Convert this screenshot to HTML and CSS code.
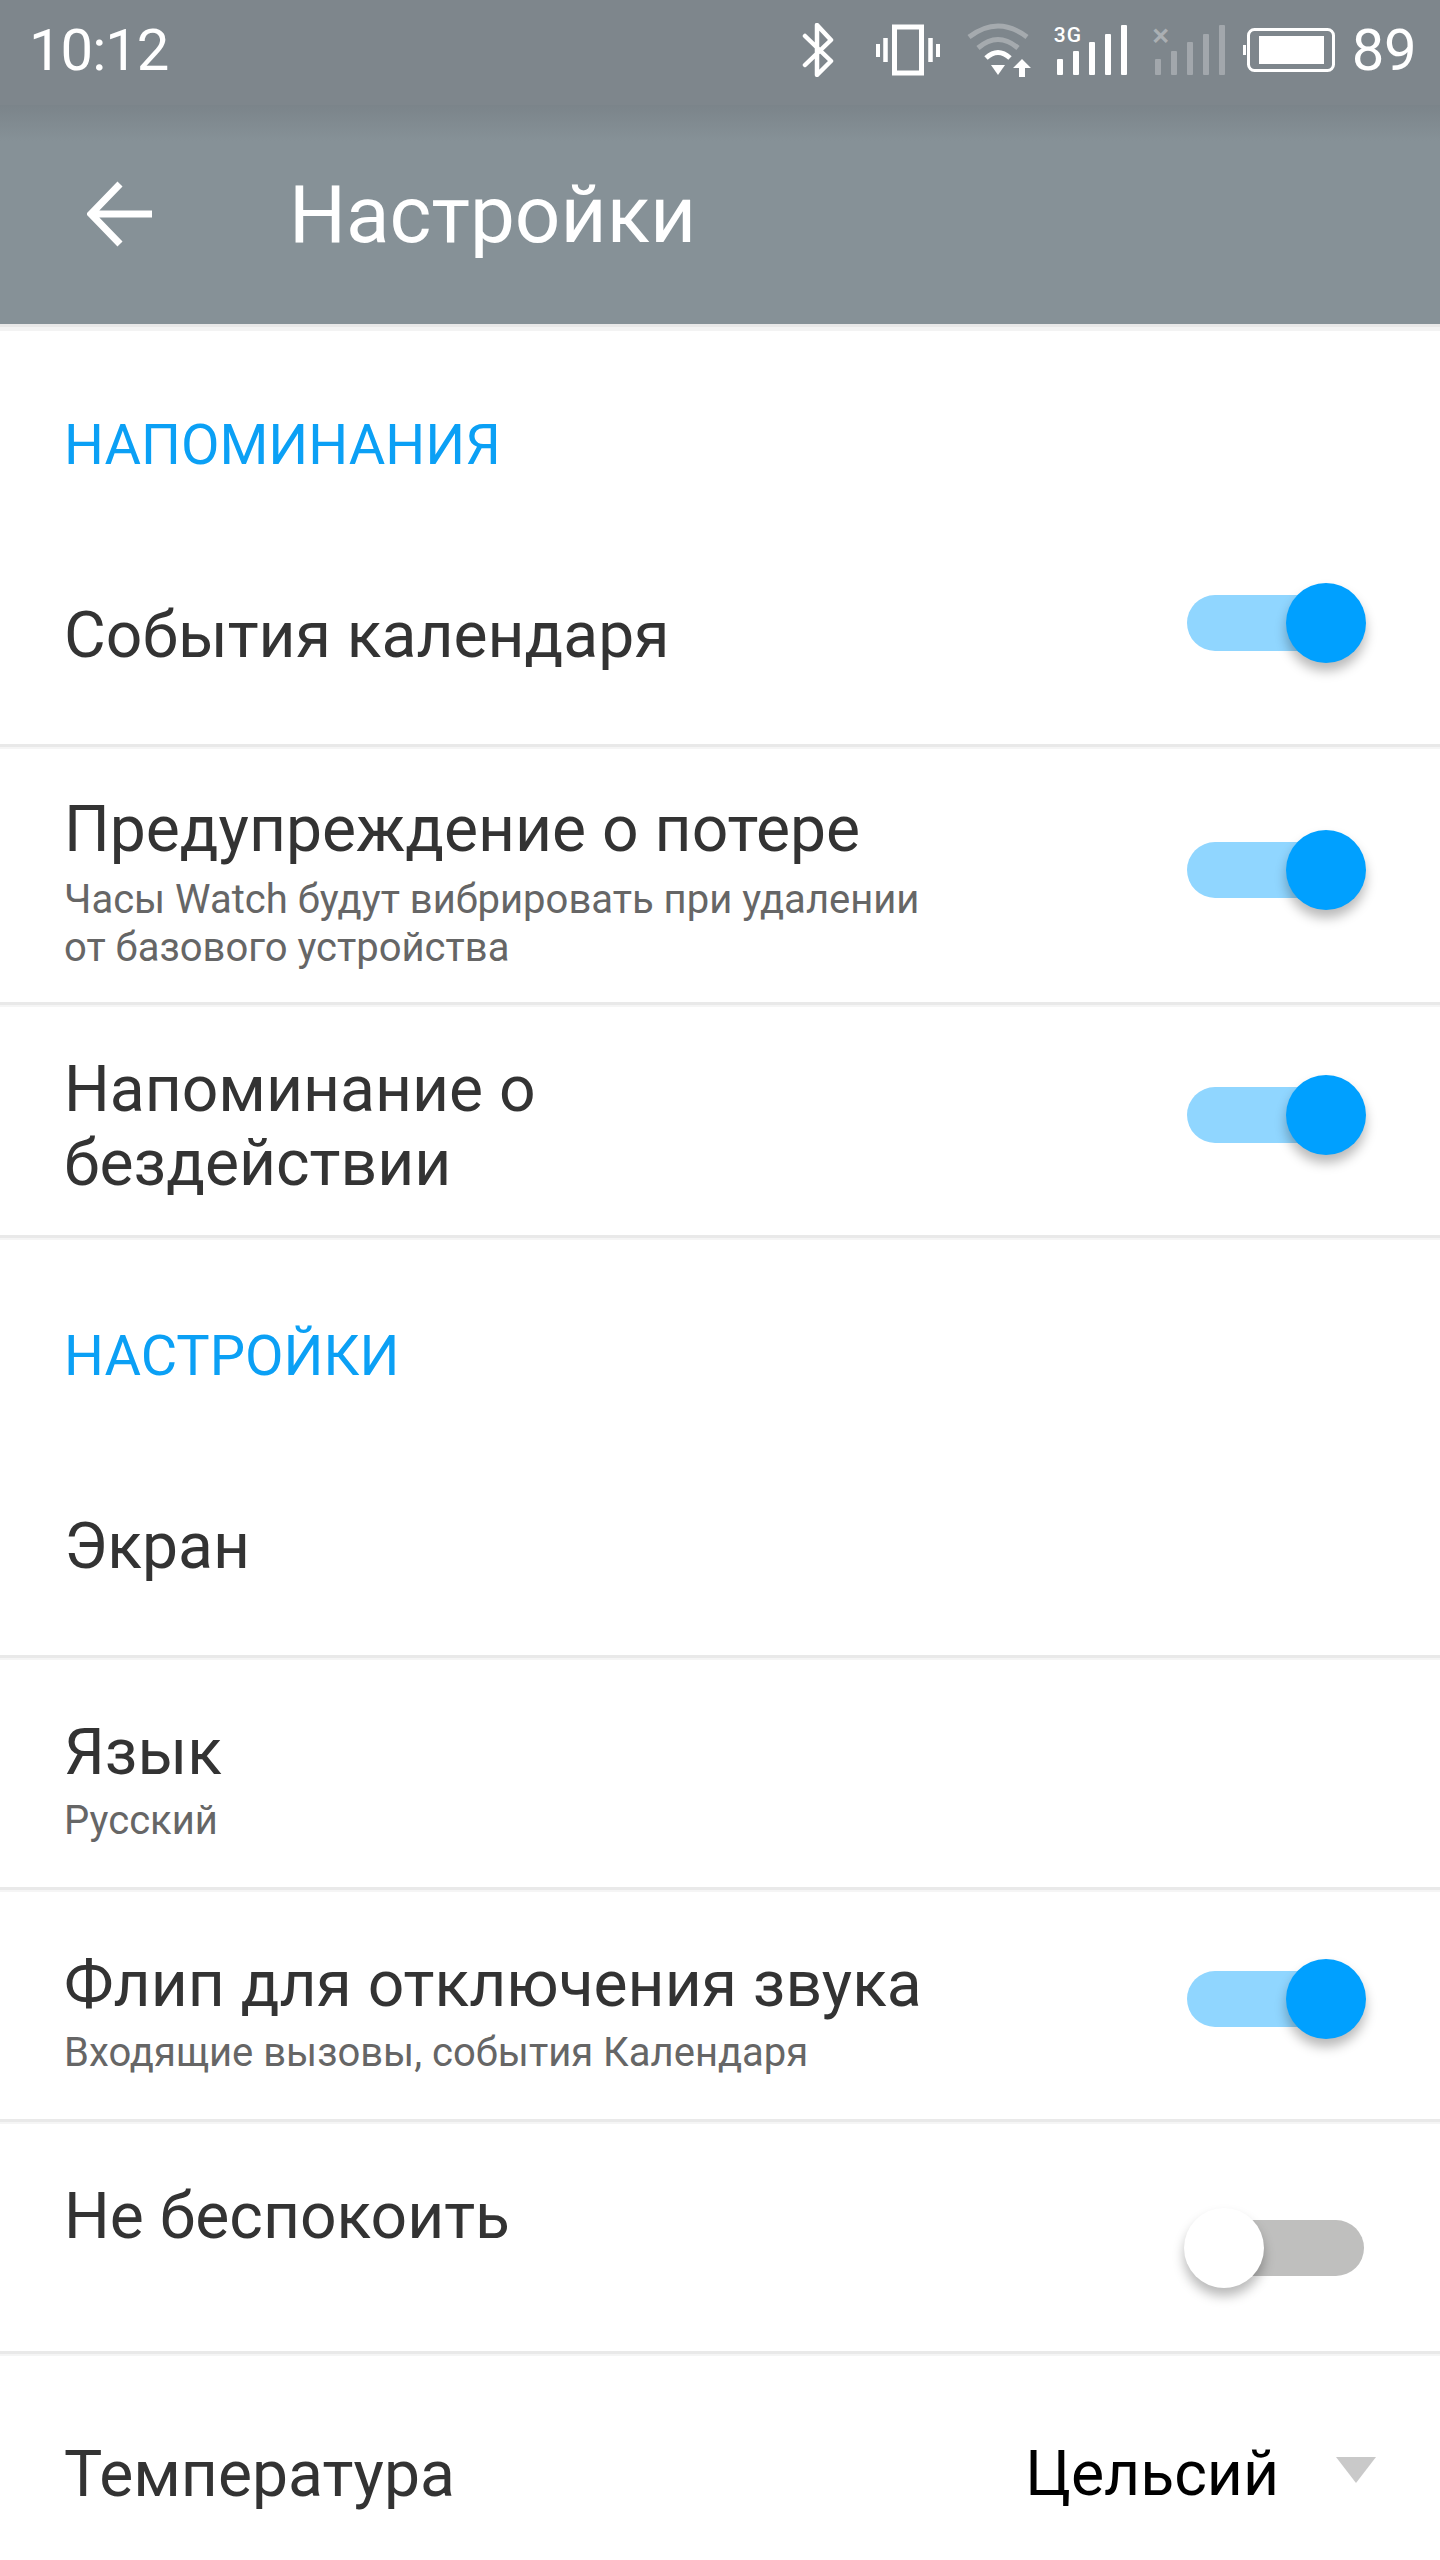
FILE: index.html
```html
<!DOCTYPE html>
<html lang="ru">
<head>
<meta charset="utf-8">
<title>Настройки</title>
<link rel="stylesheet" href="styles.css">
</head>
<body>
<div class="status">
  <span class="clock">10:12</span>
  <div class="status-icons">
    <svg class="ic-bt" width="32" height="54" viewBox="0 0 32 54"><path d="M3 13 L29 38 L15 52 V2 L29 17 L3 42" fill="none" stroke="#fff" stroke-width="4.5" stroke-linejoin="round" stroke-linecap="round"/></svg>
    <svg class="ic-vib" width="66" height="52" viewBox="0 0 66 52"><rect x="19.500" y="3" width="27" height="46" fill="none" stroke="#fff" stroke-width="5"/><path d="M10.500 14V38M55.500 14V38" stroke="#fff" stroke-width="4.500" fill="none"/><path d="M3 20V33M63 20V33" stroke="#fff" stroke-width="4" fill="none"/></svg>
    <svg class="ic-wifi" width="66" height="54" viewBox="0 0 66 54"><path d="M4 14 Q33 -8 62 14" fill="none" stroke="#fff" stroke-opacity=".3" stroke-width="5"/><path d="M13 25 Q33 8 53 25" fill="none" stroke="#fff" stroke-opacity=".3" stroke-width="5"/><path d="M21 35 Q33 24 45 35" fill="none" stroke="#fff" stroke-width="5"/><path d="M26 42 H40 L33 52Z" fill="#fff"/><path d="M57 36 L66 45 H60 V54 H54 V45 H48Z" fill="#fff"/></svg>
    <div class="signal signal-on">
      <span class="net net-3g">3G</span>
      <svg width="70" height="50" viewBox="0 0 70 50"><g fill="#fff"><rect x="0" y="34" width="6" height="16" rx="1"/><rect x="16" y="26" width="6" height="24" rx="1"/><rect x="32" y="17" width="6" height="33" rx="1"/><rect x="48" y="9" width="6" height="41" rx="1"/><rect x="64" y="0" width="6" height="50" rx="1"/></g></svg>
    </div>
    <div class="signal signal-off">
      <span class="net net-x">×</span>
      <svg width="70" height="50" viewBox="0 0 70 50"><g fill="#fff" fill-opacity=".28"><rect x="0" y="34" width="6" height="16" rx="1"/><rect x="16" y="26" width="6" height="24" rx="1"/><rect x="32" y="17" width="6" height="33" rx="1"/><rect x="48" y="9" width="6" height="41" rx="1"/><rect x="64" y="0" width="6" height="50" rx="1"/></g></svg>
    </div>
    <svg class="ic-bat" width="92" height="46" viewBox="0 0 92 46"><rect x="5.500" y="2.500" width="85" height="41" rx="6" fill="none" stroke="#fff" stroke-width="3"/><rect x="0" y="18" width="3" height="10" fill="#fff"/><rect x="16" y="9" width="65" height="28" fill="#fff"/></svg>
    <span class="batt">89</span>
  </div>
</div>
<header class="toolbar">
  <svg class="back" width="66" height="66" viewBox="0 0 66 66"><path d="M65 33 H5 M33 3 L4 33 L33 63" fill="none" stroke="#fff" stroke-width="7"/></svg>
  <h1 class="title">Настройки</h1>
</header>
<main class="list">
  <h2 class="section sec-first">НАПОМИНАНИЯ</h2>
  <div class="row row-a">
    <div class="text"><div class="name">События календаря</div></div>
    <div class="toggle on"><span class="knob"></span></div>
  </div>
  <div class="row row-b">
    <div class="text">
      <div class="name">Предупреждение о потере</div>
      <div class="sub">Часы Watch будут вибрировать при удалении<br>от базового устройства</div>
    </div>
    <div class="toggle on"><span class="knob"></span></div>
  </div>
  <div class="row row-c">
    <div class="text"><div class="name">Напоминание о<br>бездействии</div></div>
    <div class="toggle on"><span class="knob"></span></div>
  </div>
  <h2 class="section sec-second">НАСТРОЙКИ</h2>
  <div class="row row-d">
    <div class="text"><div class="name">Экран</div></div>
  </div>
  <div class="row row-e">
    <div class="text">
      <div class="name">Язык</div>
      <div class="sub">Русский</div>
    </div>
  </div>
  <div class="row row-e row-flip">
    <div class="text">
      <div class="name">Флип для отключения звука</div>
      <div class="sub">Входящие вызовы, события Календаря</div>
    </div>
    <div class="toggle on"><span class="knob"></span></div>
  </div>
  <div class="row row-e row-dnd">
    <div class="text"><div class="name">Не беспокоить</div></div>
    <div class="toggle off"><span class="knob"></span></div>
  </div>
  <div class="row row-f">
    <div class="text"><div class="name">Температура</div></div>
    <div class="value">Цельсий</div>
    <span class="caret"></span>
  </div>
</main>
</body>
</html>
```
FILE: styles.css
```css
* { box-sizing: border-box; }
html, body { margin: 0; padding: 0; }
body {
  width: 1440px;
  height: 2560px;
  overflow: hidden;
  background: #fff;
  font-family: Roboto, "Noto Sans", sans-serif;
}
.status {
  height: 105px;
  background: #7e868c;
  display: flex;
  align-items: center;
  justify-content: space-between;
  padding: 0 24px 5px 29px;
  color: #fff;
}
.clock, .batt {
  font-size: 58px;
  font-weight: 400;
  line-height: 1;
}
.clock { letter-spacing: -1px; }
.batt { letter-spacing: -0.5px; }
.status-icons { display: flex; align-items: center; }
.ic-vib { margin-left: 41px; }
.ic-wifi { margin-left: 24.500px; }
.signal { position: relative; width: 70px; height: 50px; }
.signal-on { margin-left: 25.500px; }
.signal-off { margin-left: 28.500px; }
.signal svg { display: block; }
.net {
  position: absolute;
  left: -3px;
  top: 0;
  font-size: 21px;
  line-height: 20px;
  font-weight: 500;
  letter-spacing: 1px;
  color: #fff;
}
.net-x { color: rgba(255,255,255,.35); font-size: 32px; left: -3px; letter-spacing: 0; }
.ic-bat { margin-left: 18px; }
.batt { margin-left: 16.500px; }
.toolbar {
  height: 219px;
  background: linear-gradient(#7b848a 0, #869197 36px, #869197 100%);
  display: flex;
  align-items: center;
  padding-left: 87px;
  box-shadow: 0 3px 0 #e8e8e8, 0 7px 0 #f3f3f3;
  position: relative;
}
.back { flex: none; margin-top: -1px; }
.title {
  margin: 0 0 0 136px;
  font-size: 80px;
  font-weight: 400;
  color: #fff;
  line-height: 1;
}
.section {
  margin: 0;
  padding-left: 64px;
  font-size: 56px;
  font-weight: 400;
  color: #0ba0f5;
  line-height: 66px;
}
.sec-first { padding-top: 88px; height: 206px; }
.sec-second { padding-top: 85px; height: 195px; }
.row {
  display: flex;
  align-items: flex-start;
  padding: 0 76px 0 64px;
  border-bottom: 3px solid #e9e9e9;
  box-shadow: 0 2px 0 #f5f5f5;
}
.row-a { height: 217px; padding-top: 68px; }
.row-a .toggle { margin-top: -3px; }
.row-b { height: 258px; padding-top: 45px; }
.row-b .sub { margin-top: 10px; }
.row-b .toggle { margin-top: 50px; }
.row-c { height: 233px; padding-top: 47px; }
.row-c .toggle { margin-top: 35px; }
.row-d { height: 225px; padding-top: 76px; }
.row-e { height: 232px; padding-top: 57px; }
.row-flip .toggle { margin-top: 24px; }
.row-dnd .toggle { margin-top: 41px; }
.row-f { height: 206px; padding-top: 83px; border-bottom: 0; box-shadow: none; }
.text { flex: 1; min-width: 0; }
.name {
  font-size: 64.200px;
  line-height: 74px;
  color: #333;
}
.sub {
  font-size: 40px;
  line-height: 48px;
  margin-top: 8px;
  color: #666;
}
.toggle {
  position: relative;
  flex: none;
  width: 177px;
  height: 56px;
  border-radius: 28px;
}
.toggle.on { background: #90d6ff; }
.toggle.off { background: #bfbfbe; }
.knob {
  position: absolute;
  top: -12px;
  width: 80px;
  height: 80px;
  border-radius: 50%;
  box-shadow: 0 8px 12px rgba(0,0,0,.28);
}
.on .knob { right: -2px; background: #00a0ff; }
.off .knob { left: -3px; background: #fff; }
.value {
  font-size: 62.500px;
  line-height: 74px;
  color: #000;
}
.caret {
  flex: none;
  margin: 20px -12px 0 57px;
  width: 0;
  height: 0;
  border-left: 20px solid transparent;
  border-right: 20px solid transparent;
  border-top: 26px solid #c9c9c9;
}
```
